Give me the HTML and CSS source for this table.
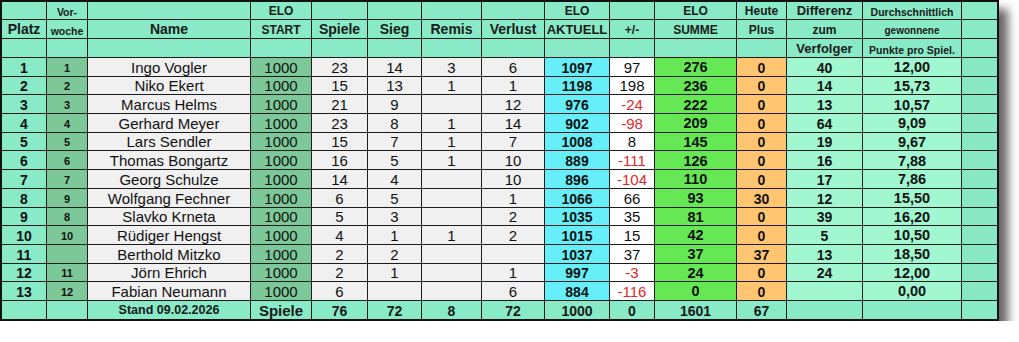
FILE: index.html
```html
<!DOCTYPE html>
<html lang="de">
<head>
<meta charset="utf-8">
<title>Rangliste</title>
<link rel="stylesheet" href="styles.css">
</head>
<body>
<div class="board">
<table class="ranking">
<colgroup>
<col class="w-platz"><col class="w-vor"><col class="w-name"><col class="w-start"><col class="w-spiele"><col class="w-sieg"><col class="w-remis"><col class="w-verlust"><col class="w-akt"><col class="w-diff"><col class="w-summe"><col class="w-heute"><col class="w-verf"><col class="w-schnitt"><col class="w-last">
</colgroup>
<thead>
<tr class="hr1"><th></th><th class="xs">Vor-</th><th></th><th class="sm">ELO</th><th></th><th></th><th></th><th></th><th class="sm">ELO</th><th></th><th class="sm">ELO</th><th class="sm">Heute</th><th class="md">Differenz</th><th class="xs">Durchschnittlich</th><th></th></tr>
<tr class="hr2"><th>Platz</th><th class="xs">woche</th><th>Name</th><th class="sm">START</th><th>Spiele</th><th>Sieg</th><th>Remis</th><th>Verlust</th><th class="md">AKTUELL</th><th class="sm">+/-</th><th class="sm">SUMME</th><th class="sm">Plus</th><th class="sm">zum</th><th class="xxs">gewonnene</th><th></th></tr>
<tr class="hr3"><th></th><th></th><th></th><th></th><th></th><th></th><th></th><th></th><th></th><th></th><th></th><th></th><th class="md">Verfolger</th><th class="xs">Punkte pro Spiel.</th><th></th></tr>
</thead>
<tbody>
<tr><td>1</td><td>1</td><td>Ingo Vogler</td><td>1000</td><td>23</td><td>14</td><td>3</td><td>6</td><td>1097</td><td>97</td><td>276</td><td>0</td><td>40</td><td>12,00</td><td></td></tr>
<tr><td>2</td><td>2</td><td>Niko Ekert</td><td>1000</td><td>15</td><td>13</td><td>1</td><td>1</td><td>1198</td><td>198</td><td>236</td><td>0</td><td>14</td><td>15,73</td><td></td></tr>
<tr><td>3</td><td>3</td><td>Marcus Helms</td><td>1000</td><td>21</td><td>9</td><td></td><td>12</td><td>976</td><td class="neg">-24</td><td>222</td><td>0</td><td>13</td><td>10,57</td><td></td></tr>
<tr><td>4</td><td>4</td><td>Gerhard Meyer</td><td>1000</td><td>23</td><td>8</td><td>1</td><td>14</td><td>902</td><td class="neg">-98</td><td>209</td><td>0</td><td>64</td><td>9,09</td><td></td></tr>
<tr><td>5</td><td>5</td><td>Lars Sendler</td><td>1000</td><td>15</td><td>7</td><td>1</td><td>7</td><td>1008</td><td>8</td><td>145</td><td>0</td><td>19</td><td>9,67</td><td></td></tr>
<tr><td>6</td><td>6</td><td>Thomas Bongartz</td><td>1000</td><td>16</td><td>5</td><td>1</td><td>10</td><td>889</td><td class="neg">-111</td><td>126</td><td>0</td><td>16</td><td>7,88</td><td></td></tr>
<tr><td>7</td><td>7</td><td>Georg Schulze</td><td>1000</td><td>14</td><td>4</td><td></td><td>10</td><td>896</td><td class="neg">-104</td><td>110</td><td>0</td><td>17</td><td>7,86</td><td></td></tr>
<tr><td>8</td><td>9</td><td>Wolfgang Fechner</td><td>1000</td><td>6</td><td>5</td><td></td><td>1</td><td>1066</td><td>66</td><td>93</td><td>30</td><td>12</td><td>15,50</td><td></td></tr>
<tr><td>9</td><td>8</td><td>Slavko Krneta</td><td>1000</td><td>5</td><td>3</td><td></td><td>2</td><td>1035</td><td>35</td><td>81</td><td>0</td><td>39</td><td>16,20</td><td></td></tr>
<tr><td>10</td><td>10</td><td>Rüdiger Hengst</td><td>1000</td><td>4</td><td>1</td><td>1</td><td>2</td><td>1015</td><td>15</td><td>42</td><td>0</td><td>5</td><td>10,50</td><td></td></tr>
<tr><td>11</td><td></td><td>Berthold Mitzko</td><td>1000</td><td>2</td><td>2</td><td></td><td></td><td>1037</td><td>37</td><td>37</td><td>37</td><td>13</td><td>18,50</td><td></td></tr>
<tr><td>12</td><td>11</td><td>Jörn Ehrich</td><td>1000</td><td>2</td><td>1</td><td></td><td>1</td><td>997</td><td class="neg">-3</td><td>24</td><td>0</td><td>24</td><td>12,00</td><td></td></tr>
<tr><td>13</td><td>12</td><td>Fabian Neumann</td><td>1000</td><td>6</td><td></td><td></td><td>6</td><td>884</td><td class="neg">-116</td><td>0</td><td>0</td><td></td><td>0,00</td><td></td></tr>
</tbody>
<tfoot>
<tr><td></td><td></td><td class="stand">Stand 09.02.2026</td><td class="big">Spiele</td><td>76</td><td>72</td><td>8</td><td>72</td><td>1000</td><td>0</td><td>1601</td><td>67</td><td></td><td></td><td></td></tr>
</tfoot>
</table>
</div>
</body>
</html>
```
FILE: styles.css
```css
html, body {
  margin: 0;
  padding: 0;
  background: #ffffff;
}

body {
  font-family: "Liberation Sans", Arial, sans-serif;
  color: #111;
}

.board {
  width: max-content;
  box-shadow: 9px 9px 9px rgba(0, 0, 0, 0.6);
}

.ranking {
  border-collapse: separate;
  border-spacing: 0;
  table-layout: fixed;
  width: 999px;
  border: 2px solid #111;
  background: #88eac6;
}

.w-platz { width: 45px; }
.w-vor { width: 41px; }
.w-name { width: 163px; }
.w-start { width: 61px; }
.w-spiele { width: 56px; }
.w-sieg { width: 54px; }
.w-remis { width: 60px; }
.w-verlust { width: 63px; }
.w-akt { width: 65px; }
.w-diff { width: 45px; }
.w-summe { width: 82px; }
.w-heute { width: 50px; }
.w-verf { width: 76px; }
.w-schnitt { width: 99px; }
.w-last { width: 35px; }

th, td {
  padding: 0 0 1px 0;
  border-right: 1px solid #1c1c1c;
  border-bottom: 1px solid #1c1c1c;
  text-align: center;
  vertical-align: bottom;
  line-height: 1;
  white-space: nowrap;
  overflow: hidden;
}

tr > :last-child {
  border-right: none;
}

tfoot td {
  border-bottom: none;
}

/* header */
thead th {
  background: #88eac6;
  font-weight: bold;
  font-size: 14px;
  color: #1a1a1a;
  padding-bottom: 2px;
}

.hr1 { height: 18px; }
.hr2 { height: 19px; }
.hr3 { height: 19px; }

thead .sm { font-size: 12px; }
thead .md { font-size: 13px; }
thead .xs { font-size: 10.5px; }
thead .xxs { font-size: 10px; }

/* data rows */
tbody tr { height: 18.7px; }

tbody td {
  font-size: 15px;
  color: #111;
}

tbody td:nth-child(1) { background: #88eac6; font-weight: bold; font-size: 14px; }
tbody td:nth-child(2) { background: #7dc898; font-weight: bold; font-size: 11px; padding-bottom: 2px; }
tbody td:nth-child(3) { background: #f0f0f0; }
tbody td:nth-child(4) { background: #7dc898; }
tbody td:nth-child(5),
tbody td:nth-child(6),
tbody td:nth-child(7),
tbody td:nth-child(8) { background: #f0f0f0; }
tbody td:nth-child(9) { background: #66eff8; font-weight: bold; font-size: 14px; }
tbody td:nth-child(10) { background: #ffffff; }
tbody td:nth-child(11) { background: #66e855; font-weight: bold; font-size: 14.5px; }
tbody td:nth-child(12) { background: #ffc570; font-weight: bold; font-size: 14px; }
tbody td:nth-child(13) { background: #a0f7d0; font-weight: bold; font-size: 14px; }
tbody td:nth-child(14) { background: #a0f7d0; font-weight: bold; font-size: 14.5px; }
tbody td:nth-child(15) { background: #88e8c6; }

tbody td.neg { color: #e3262b; }

/* footer */
tfoot tr { height: 18px; }

tfoot td {
  background: #88eac6;
  font-weight: bold;
  font-size: 14px;
  color: #1a1a1a;
}

tfoot .stand { font-size: 12.5px; padding-bottom: 2px; }
tfoot .big { font-size: 15px; }
```
